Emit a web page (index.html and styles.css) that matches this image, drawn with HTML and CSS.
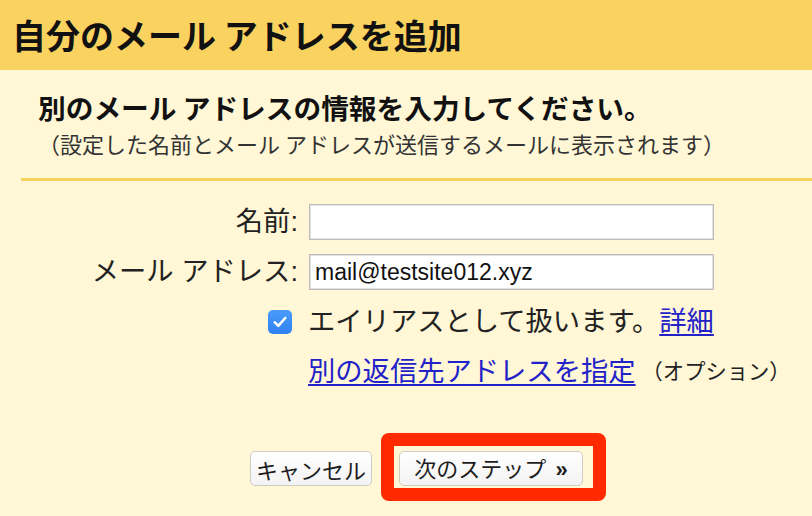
FILE: index.html
```html
<!DOCTYPE html>
<html lang="ja">
<head>
<meta charset="utf-8">
<title>自分のメール アドレスを追加</title>
<link rel="stylesheet" href="styles.css">
</head>
<body>
<div class="page">
  <header class="top">
    <h1 class="title">自分のメール アドレスを追加</h1>
  </header>
  <main class="content">
    <h2 class="lead">別のメール アドレスの情報を入力してください。</h2>
    <p class="note">（設定した名前とメール アドレスが送信するメールに表示されます）</p>
    <div class="rule"></div>
    <div class="form">
      <label class="label" for="name">名前:</label>
      <div class="field"><input class="input" id="name" type="text" value=""></div>
      <label class="label" for="mail">メール アドレス:</label>
      <div class="field"><input class="input" id="mail" type="text" value="mail@testsite012.xyz"></div>
      <div class="label cbcell">
        <span class="checkbox">
          <svg width="14" height="12" viewBox="0 0 14 12"><path d="M1.8 6.4 L5.3 9.8 L12.2 2" fill="none" stroke="#fff" stroke-width="2.6" stroke-linecap="round" stroke-linejoin="round"/></svg>
        </span>
      </div>
      <div class="field text">エイリアスとして扱います。<a class="link" href="#">詳細</a></div>
      <div class="label"></div>
      <div class="field text"><a class="link" href="#">別の返信先アドレスを指定</a><span class="opt">（オプション）</span></div>
    </div>
    <div class="actions">
      <button class="btn" type="button">キャンセル</button>
      <div class="next-wrap">
        <button class="btn next" type="button">次のステップ<b class="raquo">»</b></button>
        <span class="highlight"></span>
      </div>
    </div>
  </main>
</div>
</body>
</html>
```
FILE: styles.css
```css
html, body {
  margin: 0;
  padding: 0;
}
body {
  width: 812px;
  height: 516px;
  overflow: hidden;
  background: #fff7d6;
  font-family: "Liberation Sans", "Noto Sans CJK JP", sans-serif;
  color: #1d1d1d;
}
.page {
  display: flex;
  flex-direction: column;
}
.top {
  height: 70px;
  background: #f9d25f;
  display: flex;
  align-items: center;
  padding-left: 12px;
}
.title {
  margin: 0;
  font-size: 34px;
  font-weight: 700;
  line-height: 40px;
  color: #111;
  font-family: "Noto Sans CJK JP", sans-serif;
}
.content {
  display: flex;
  flex-direction: column;
}
.lead {
  margin: 19px 0 0 38px;
  font-size: 27.7px;
  line-height: 36px;
  font-weight: 700;
  color: #111;
  font-family: "Noto Sans CJK JP", sans-serif;
}
.note {
  margin: 3px 0 0 38px;
  font-size: 22px;
  line-height: 30px;
  color: #333;
  font-family: "Noto Sans CJK JP", sans-serif;
}
.rule {
  margin: 20px 0 0 21px;
  height: 3px;
  background: #f9d25f;
}
.form {
  margin-top: 23px;
  display: grid;
  grid-template-columns: 298px 405px;
  grid-auto-rows: 36px;
  column-gap: 11px;
  row-gap: 14px;
}
.label {
  justify-self: end;
  align-self: center;
  font-size: 27.3px;
  line-height: 36px;
  color: #222;
}
.cbcell {
  display: flex;
  align-items: center;
  padding-right: 6px;
}
.checkbox {
  width: 24px;
  height: 24px;
  border-radius: 5px;
  background: linear-gradient(#4a9bfa, #2f82f2);
  display: flex;
  align-items: center;
  justify-content: center;
}
.field {
  display: flex;
  align-items: center;
}
.input {
  width: 405px;
  height: 36px;
  box-sizing: border-box;
  border: 1px solid #bcbcbc;
  box-shadow: inset 0 0 0 1px #e2e2e2;
  background: #fff;
  padding: 0 5px;
  font-family: "Liberation Sans", sans-serif;
  font-size: 23px;
  color: #111;
  outline: none;
}
.text {
  font-size: 27.3px;
  line-height: 36px;
  color: #222;
  white-space: nowrap;
  margin-left: -1px;
}
.link {
  color: #2222c8;
  text-decoration: underline;
  text-underline-offset: 3px;
  text-decoration-thickness: 2px;
}
.text .link + .opt {
  margin-left: 6px;
}
.opt {
  font-size: 21.3px;
  color: #222;
}
.actions {
  margin: 61px 0 0 250px;
  display: flex;
  align-items: center;
  gap: 27px;
}
.btn {
  height: 35px;
  box-sizing: border-box;
  border: 1px solid #cfcbc0;
  border-radius: 5px;
  background: linear-gradient(#ffffff, #f3f3f3);
  font-family: "Noto Sans CJK JP", sans-serif;
  font-size: 22px;
  line-height: 1;
  color: #1d1d1d;
  padding: 0;
  width: 122px;
}
.next {
  width: 184px;
}
.raquo {
  font-family: "Liberation Sans", sans-serif;
  font-weight: 700;
  font-size: 22px;
  margin-left: 9px;
}
.next-wrap {
  position: relative;
  display: flex;
}
.highlight {
  position: absolute;
  left: -18px;
  top: -18px;
  width: 225px;
  height: 68px;
  box-sizing: border-box;
  border: 13px solid #ff2a00;
  border-radius: 8px;
  pointer-events: none;
}
```
